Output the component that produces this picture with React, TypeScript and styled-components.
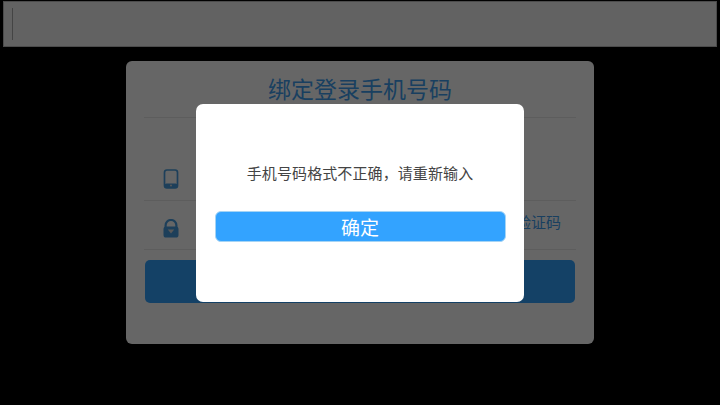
import { createGlobalStyle } from "styled-components";
import styled from "styled-components";

const GlobalStyle = createGlobalStyle`
    html, body {
        margin: 0;
        height: 100%;
        background: #000;
        overflow: hidden;
        font-family: "Liberation Sans", "Noto Sans CJK SC", sans-serif;
    }
`;

const PhoneIcon = () => (
    <svg width="16" height="20" viewBox="0 0 16 20">
        <rect x="1.5" y="1" width="13" height="18" rx="2.4" fill="none" stroke="#4a9ee0" strokeWidth="1.7" />
        <rect x="1.5" y="14.6" width="13" height="4.4" rx="2" fill="#4a9ee0" />
        <circle cx="8" cy="16.6" r="1" fill="#ddd" />
    </svg>
);

const LockIcon = () => (
    <svg width="16" height="19" viewBox="0 0 16 19">
        <path d="M2.6 9V6.4a5.4 5.4 0 0 1 10.8 0V9" fill="none" stroke="#4a9ee0" strokeWidth="2.2" />
        <rect x="0.5" y="7.5" width="15" height="11" rx="2.6" fill="#4a9ee0" />
        <path d="M4.8 10.4h6.4L8 14.6z" fill="#ddd" />
    </svg>
);

const App = () => {
    return (
        <>
            <GlobalStyle />
            <Page>
                <InputBar>
                    <Caret />
                </InputBar>
                <Card>
                    <Title>绑定登录手机号码</Title>
                    <Rows>
                        <Row>
                            <IconCell><PhoneIcon /></IconCell>
                        </Row>
                        <Row>
                            <IconCell><LockIcon /></IconCell>
                            <CodeLink>获取验证码</CodeLink>
                        </Row>
                    </Rows>
                    <SubmitButton />
                </Card>
            </Page>
            <Overlay>
                <Dialog>
                    <Message>手机号码格式不正确，请重新输入</Message>
                    <ConfirmButton>确定</ConfirmButton>
                </Dialog>
            </Overlay>
        </>
    );
};

export default App;

const Page = styled.div`
    display: flex;
    flex-direction: column;
    align-items: center;
    height: 405px;
    padding-top: 1px;
    box-sizing: border-box;
`;

const InputBar = styled.div`
    display: flex;
    align-items: center;
    width: 714px;
    height: 46px;
    padding-left: 8px;
    box-sizing: border-box;
    background: #f4f4f4;
    border: 1px solid #bbb;
`;

const Caret = styled.div`
    width: 1px;
    height: 32px;
    background: #aaa;
`;

const Card = styled.div`
    display: flex;
    flex-direction: column;
    width: 468px;
    height: 283px;
    margin-top: 14px;
    padding: 0 18px;
    box-sizing: border-box;
    background: #fff;
    border-radius: 6px;
`;

const Title = styled.div`
    height: 57px;
    line-height: 58px;
    text-align: center;
    font-size: 23px;
    color: #3f9ff0;
    border-bottom: 1px solid #e8e8e8;
    box-sizing: border-box;
`;

const Rows = styled.div`
    display: flex;
    flex-direction: column;
    padding-top: 34px;
`;

const Row = styled.div`
    display: flex;
    align-items: center;
    justify-content: space-between;
    height: 49px;
    padding-right: 15px;
    border-bottom: 1px solid #e8e8e8;
    box-sizing: border-box;
`;

const IconCell = styled.div`
    display: flex;
    justify-content: center;
    width: 54px;
    padding-top: 6px;
`;

const CodeLink = styled.div`
    font-size: 15px;
    line-height: 20px;
    margin-bottom: 4px;
    color: #3f9ff0;
`;

const SubmitButton = styled.div`
    height: 43px;
    margin: 10px 1px 0;
    background: #33a3ff;
    border-radius: 5px;
`;

const Overlay = styled.div`
    position: fixed;
    inset: 0;
    display: flex;
    align-items: center;
    justify-content: center;
    background: rgba(0, 0, 0, 0.6);
`;

const Dialog = styled.div`
    display: flex;
    flex-direction: column;
    align-items: center;
    width: 328px;
    height: 198px;
    padding-top: 60px;
    box-sizing: border-box;
    background: #fff;
    border-radius: 7px;
`;

const Message = styled.div`
    font-size: 15px;
    line-height: 20px;
    letter-spacing: 0.1px;
    color: #444;
`;

const ConfirmButton = styled.div`
    width: 291px;
    height: 31px;
    margin-top: 27px;
    line-height: 34px;
    text-align: center;
    font-size: 19px;
    color: #fff;
    background: #33a3ff;
    border: 1px solid #a5d4f5;
    border-radius: 6px;
    box-sizing: border-box;
`;
